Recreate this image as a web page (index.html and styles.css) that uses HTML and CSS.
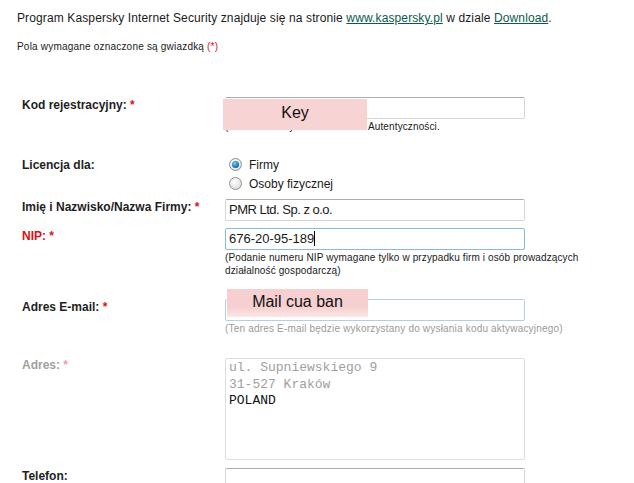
FILE: index.html
```html
<!DOCTYPE html>
<html lang="pl">
<head>
<meta charset="utf-8">
<title>Rejestracja</title>
<link rel="stylesheet" href="styles.css">
</head>
<body>
<div class="page">
  <p class="intro">Program Kaspersky Internet Security znajduje się na stronie <a href="#">www.kaspersky.pl</a> w dziale <a href="#">Download</a>.</p>
  <p class="note">Pola wymagane oznaczone są gwiazdką <span class="req">(*)</span></p>

  <div class="form">
    <div class="row row-kod">
      <div class="label">Kod rejestracyjny: <span class="req">*</span></div>
      <div class="field">
        <div class="input"></div>
        <div class="caption"><span class="hidden-part">(Numer z Certyfikatu</span>Autentyczności.</div>
        <div class="mask mask-key">Key</div>
      </div>
    </div>

    <div class="row row-lic">
      <div class="label label-lic">Licencja dla:</div>
      <div class="field">
        <div class="radio-line"><span class="radio checked"></span><span>Firmy</span></div>
        <div class="radio-line"><span class="radio"></span><span>Osoby fizycznej</span></div>
      </div>
    </div>

    <div class="row row-name">
      <div class="label">Imię i Nazwisko/Nazwa Firmy: <span class="req">*</span></div>
      <div class="field">
        <div class="input tight">PMR Ltd. Sp. z o.o.</div>
      </div>
    </div>

    <div class="row row-nip">
      <div class="label label-err">NIP: *</div>
      <div class="field">
        <div class="input focus">676-20-95-189<span class="caret"></span></div>
        <div class="caption">(Podanie numeru NIP wymagane tylko w przypadku firm i osób prowadzących<br>działalność gospodarczą)</div>
      </div>
    </div>

    <div class="row row-mail">
      <div class="label">Adres E-mail: <span class="req">*</span></div>
      <div class="field">
        <div class="input soft"></div>
        <div class="caption muted">(Ten adres E-mail będzie wykorzystany do wysłania kodu aktywacyjnego)</div>
        <div class="mask mask-mail">Mail cua ban</div>
      </div>
    </div>

    <div class="row row-addr">
      <div class="label label-off">Adres: <span class="req-off">*</span></div>
      <div class="field">
        <div class="textarea">
          <div class="ta-muted">ul. Supniewskiego 9</div>
          <div class="ta-muted">31-527 Kraków</div>
          <div>POLAND</div>
        </div>
      </div>
    </div>

    <div class="row row-tel">
      <div class="label">Telefon:</div>
      <div class="field">
        <div class="input"></div>
      </div>
    </div>
  </div>
</div>
</body>
</html>
```

FILE: styles.css
```css
html, body {
  margin: 0;
  padding: 0;
  background: #ffffff;
}

body {
  font-family: "Liberation Sans", Arial, sans-serif;
  color: #1a1a1a;
  overflow: hidden;
}

.page {
  padding-left: 17px;
}

.intro {
  margin: 11px 0 0 0;
  font-size: 12px;
  line-height: 14px;
  letter-spacing: 0.12px;
}

.intro a {
  color: #0b5a4a;
  text-decoration: underline;
}

.note {
  margin: 16px 0 0 0;
  font-size: 10px;
  line-height: 12px;
  letter-spacing: 0.2px;
}

.req {
  color: #e01010;
}

.form {
  margin-top: 44px;
  padding-left: 5px;
}

.row {
  display: grid;
  grid-template-columns: 203px 1fr;
}

.row-lic { margin-top: 23px; }
.row-name { margin-top: 5px; }
.row-nip { margin-top: 7px; }
.row-mail { margin-top: 22px; }
.row-addr { margin-top: 23px; }
.row-tel { margin-top: 8px; }

.label {
  font-weight: bold;
  font-size: 12px;
  line-height: 14px;
  padding-top: 1px;
  color: #1e1e1e;
}

.label-lic {
  padding-top: 2px;
}

.label-err {
  color: #e01010;
}

.label-off {
  color: #a0a0a0;
  padding-top: 0;
}

.req-off {
  color: #f2a0a0;
}

.field {
  position: relative;
}

.input {
  box-sizing: border-box;
  width: 300px;
  height: 22px;
  border: 1px solid #d6d6d6;
  border-top-color: #acacac;
  border-radius: 2px;
  padding: 0 3px;
  font-size: 13px;
  line-height: 20px;
  color: #1a1a1a;
  white-space: nowrap;
}

.input.tight {
  letter-spacing: -0.5px;
}

.input.focus {
  border-color: #8ab8e4;
}

.input.soft {
  border-color: #b5cde4;
}

.caret {
  display: inline-block;
  width: 1px;
  height: 15px;
  background: #000;
  vertical-align: -3px;
}

.caption {
  margin-top: 1px;
  font-size: 10px;
  line-height: 13px;
  color: #1a1a1a;
  white-space: nowrap;
  letter-spacing: 0.12px;
}

.caption.muted {
  color: #9a9a9a;
  letter-spacing: 0.19px;
}

.hidden-part {
  display: inline-block;
  width: 143px;
  vertical-align: top;
  white-space: nowrap;
}

.mask {
  position: absolute;
  display: flex;
  align-items: center;
  justify-content: center;
  font-family: "Liberation Sans", Arial, sans-serif;
  font-size: 16px;
  color: #111;
}

.mask-key {
  left: -2px;
  top: 2px;
  width: 144px;
  height: 31px;
  background: #f7d3d3;
  padding-bottom: 3px;
  box-sizing: border-box;
}

.mask-mail {
  left: 2px;
  top: -10px;
  width: 141px;
  height: 28px;
  background: linear-gradient(to bottom, #f6d0d0 0%, #f6d0d0 65%, #fbe6e6 100%);
  padding-bottom: 2px;
  box-sizing: border-box;
}

.radio-line {
  display: flex;
  align-items: flex-start;
  gap: 7px;
  padding-left: 4px;
  font-size: 12px;
  line-height: 19px;
  color: #1a1a1a;
}

.radio {
  box-sizing: border-box;
  width: 13px;
  height: 13px;
  margin-top: 2px;
  border-radius: 50%;
  border: 1px solid #8f9090;
  background: radial-gradient(circle at 40% 35%, #ffffff 0%, #e6e6e6 60%, #cfcfcf 100%);
  position: relative;
}

.radio.checked::after {
  content: "";
  position: absolute;
  left: 2px;
  top: 2px;
  width: 7px;
  height: 7px;
  border-radius: 50%;
  background: radial-gradient(circle at 40% 35%, #7fd0f5 0%, #1b7fc0 55%, #0b3f70 100%);
}

.textarea {
  box-sizing: border-box;
  width: 300px;
  height: 102px;
  border: 1px solid #d9dee5;
  border-radius: 2px;
  padding: 1px 3px;
  font-family: "Liberation Mono", "Courier New", monospace;
  font-size: 13px;
  line-height: 16.5px;
  color: #111;
}

.ta-muted {
  color: #a0a0a0;
}
```
